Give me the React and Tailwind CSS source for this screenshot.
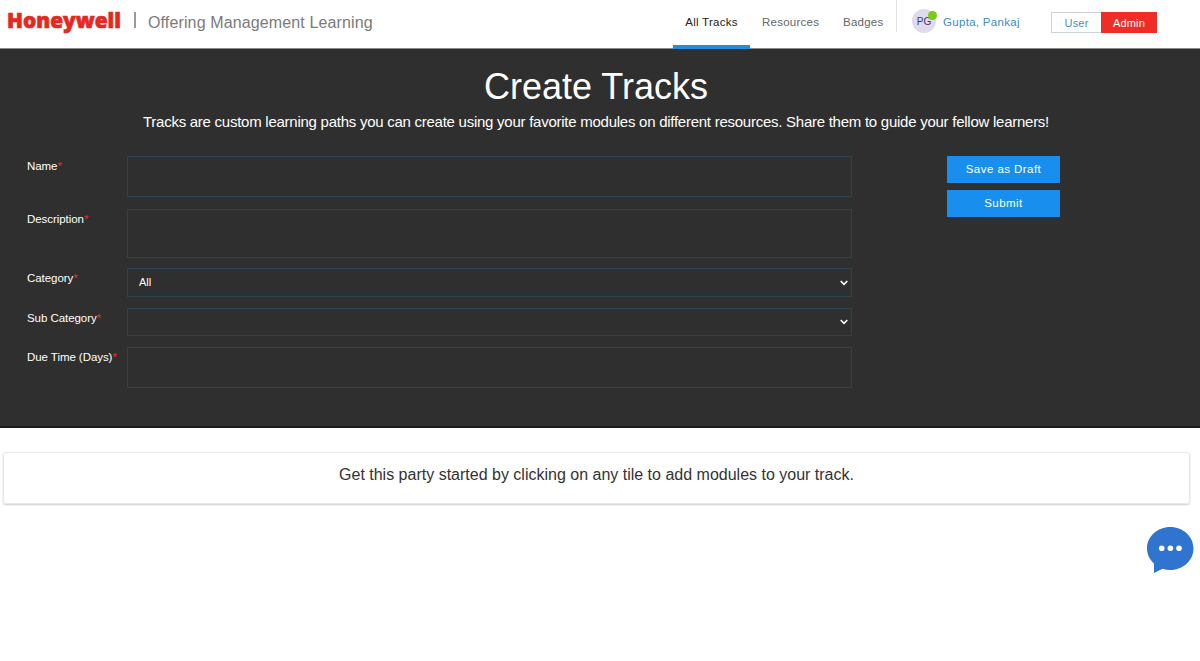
import React from "react";

function Honeywell() {
  return (
    <svg width="122" height="40" viewBox="0 0 122 40" className="block shrink-0 overflow-visible" role="img" aria-label="Honeywell">
      <text x="7" y="28" textLength="114" lengthAdjust="spacingAndGlyphs" fontSize="21.5" fontWeight="800" fontFamily="'Open Sans', sans-serif" fill="#e6291f" stroke="#e6291f" strokeWidth="0.7">
        Honeywell
      </text>
    </svg>
  );
}

function Header() {
  return (
    <header className="flex h-[49px] items-start border-b border-[#8a8a8a] bg-white">
      <Honeywell />
      <span className="mt-3 ml-[12px] h-4 w-[2px] shrink-0 bg-[#9a9a9a]" />
      <span className="mt-[11px] ml-3 w-[525px] whitespace-nowrap text-base leading-6 tracking-[0.13px] text-[#7b7b7b]">
        Offering Management Learning
      </span>
      <nav className="flex h-[49px] text-[11.5px] leading-[44px] tracking-[0.25px] text-[#666]">
        <a className="w-[77px] border-b-4 border-[#1f8fdc] text-center whitespace-nowrap text-[#222]">All Tracks</a>
        <a className="ml-3 w-[58px] whitespace-nowrap">Resources</a>
        <a className="ml-[23px] w-[41px] whitespace-nowrap">Badges</a>
      </nav>
      <span className="ml-[12px] h-8 w-px shrink-0 bg-[#e2e2e2]" />
      <span className="relative mt-[9px] ml-[15px] flex size-6 shrink-0 items-center justify-center rounded-full bg-[#dfdaec] text-[10px] text-[#3f3566]">
        PG
        <span className="absolute top-[2px] left-4 size-[9px] rounded-full bg-[#7acb12]" />
      </span>
      <span className="ml-[7px] w-[108px] text-[11.5px] leading-[44px] tracking-[0.3px] whitespace-nowrap text-[#3a8dc8]">Gupta, Pankaj</span>
      <div className="mt-3 flex h-[21px] shrink-0 text-[11px] leading-[21px] tracking-[0.2px]">
        <button className="w-[50px] border border-r-0 border-[#cdd2d6] leading-5 text-[#4a90c2]">User</button>
        <button className="w-[56px] bg-[#ee2e26] pt-px text-white">Admin</button>
      </div>
    </header>
  );
}

function Chevron() {
  return (
    <svg width="8" height="6" viewBox="0 0 8 6" fill="none" stroke="#fff" strokeWidth="1.6">
      <path d="M0.7 1L4 4.3L7.3 1" />
    </svg>
  );
}

function Field({ label, box, children }) {
  return (
    <div className="flex">
      <label className="w-[100px] shrink-0 pt-[2px] text-[11.5px] leading-4 tracking-[-0.06px] whitespace-nowrap text-white">
        {label}
        <span className="text-[#f02b20]">*</span>
      </label>
      <div className={`flex w-[725px] items-center justify-between border border-[#2b4353] pr-[3px] pl-[11px] text-[11px] text-white ${box}`}>
        {children}
      </div>
    </div>
  );
}

export default function App() {
  return (
    <div className="relative min-h-[661px] w-[1200px] bg-white font-['Liberation_Sans',Arial,sans-serif]">
      <Header />
      <main>
        <section className="h-[379px] border-b-2 border-[#1c1c1c] bg-[#2f2f2f]">
          <div className="flex w-[1192px] flex-col items-center pt-4 text-white">
            <h1 className="text-4xl leading-[44px] whitespace-nowrap">Create Tracks</h1>
            <p className="mt-px text-[15px] leading-6 tracking-[-0.256px] whitespace-nowrap">
              Tracks are custom learning paths you can create using your favorite modules on different resources. Share them to guide your fellow learners!
            </p>
          </div>
          <div className="mt-[22px] flex pl-[27px]">
            <form className="flex flex-col">
              <Field label="Name" box="mb-3 h-[41px]" />
              <Field label="Description" box="mb-[10px] h-[49px]" />
              <Field label="Category" box="mb-[11px] h-[29px]">
                <span>All</span>
                <Chevron />
              </Field>
              <Field label="Sub Category" box="mb-[11px] h-[28px]">
                <span />
                <Chevron />
              </Field>
              <Field label="Due Time (Days)" box="h-[41px]" />
            </form>
            <div className="ml-[95px] flex w-[113px] flex-col gap-[7px] text-[11.5px] tracking-[0.45px] text-white">
              <button className="h-[27px] bg-[#188fee]">Save as Draft</button>
              <button className="h-[27px] bg-[#188fee]">Submit</button>
            </div>
          </div>
        </section>
        <section className="mt-6 ml-[3px] h-[52px] w-[1187px] rounded-[3px] border border-[#e8e8e8] pt-[10px] text-center text-base leading-6 whitespace-nowrap text-[#333] shadow-[0_1px_2px_rgba(0,0,0,0.2)]">
          Get this party started by clicking on any tile to add modules to your track.
        </section>
      </main>
      <button className="absolute top-[527px] left-[1147px]" aria-label="Chat">
        <svg width="47" height="46" viewBox="0 0 47 46" className="block">
          <path d="M23.3 0C36 0 46.5 9.5 46.5 21.5S36 43 23.3 43C20.6 43 18 42.6 15.6 41.8L7 46L7 36.5C2.7 32.6 0 27.3 0 21.5C0 9.5 10.4 0 23.3 0Z" fill="#2f74cf" />
          <circle cx="14.7" cy="21.3" r="2.8" fill="#fff" />
          <circle cx="23.4" cy="21.3" r="2.8" fill="#fff" />
          <circle cx="32" cy="21.3" r="2.8" fill="#fff" />
        </svg>
      </button>
    </div>
  );
}
